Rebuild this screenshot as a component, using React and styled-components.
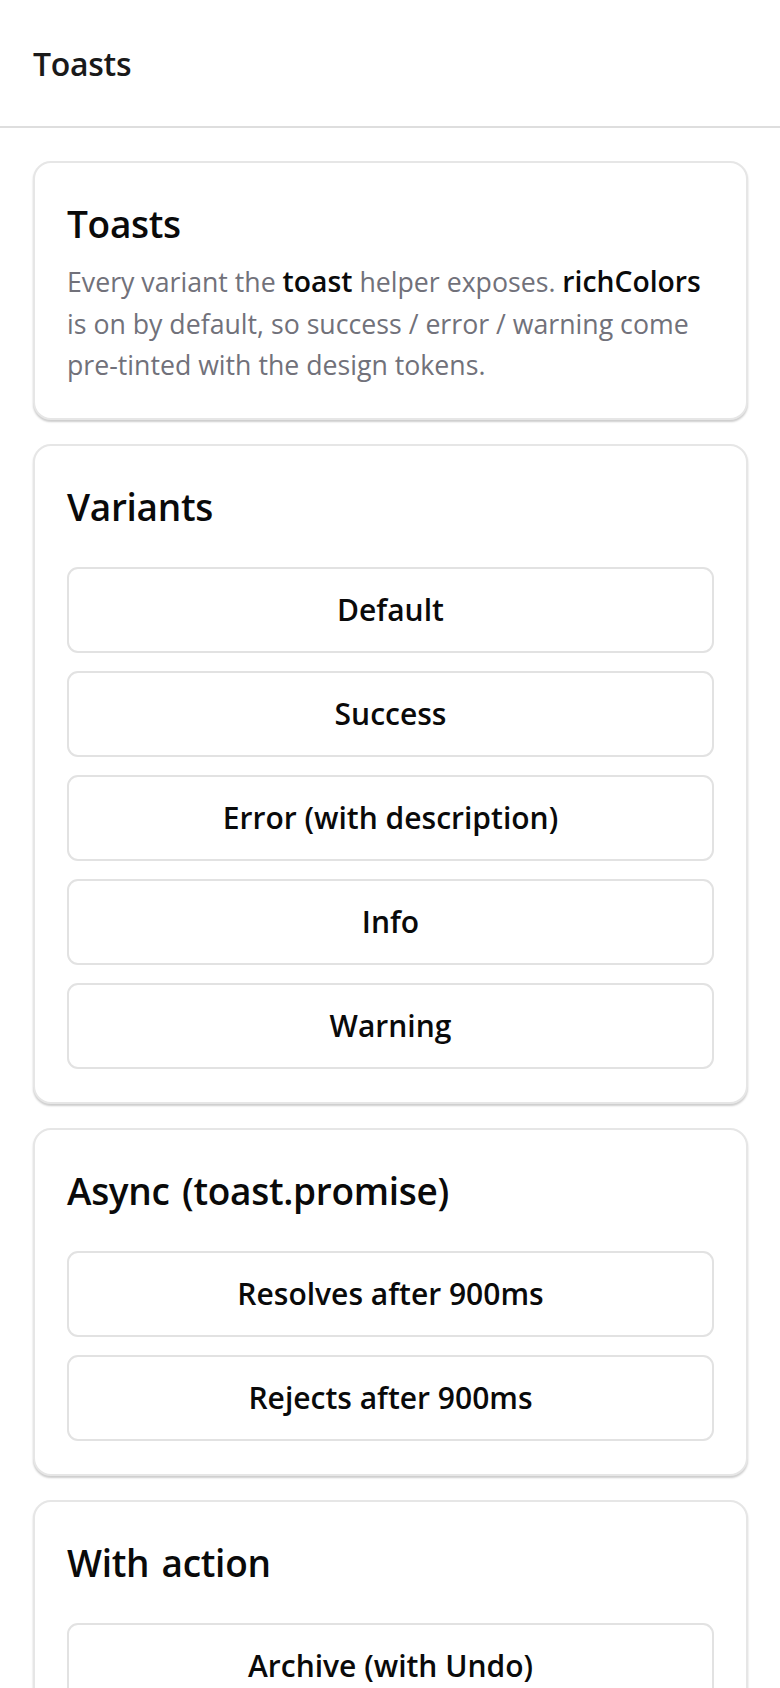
import styled, { createGlobalStyle } from "styled-components";

const GlobalStyle = createGlobalStyle`
  * {
    box-sizing: border-box;
  }

  body {
    margin: 0;
    background: #ffffff;
    font-family: "Open Sans", "Noto Sans", sans-serif;
    color: #0a0a0a;
  }
`;

const Header = styled.header`
  display: flex;
  align-items: center;
  height: 128px;
  padding: 0 33px;
  border-bottom: 2px solid #dedede;
`;

const PageTitle = styled.h1`
  margin: 0;
  font-size: 32px;
  font-weight: 600;
  color: #1a1a1a;
  letter-spacing: -0.3px;
`;

const Main = styled.main`
  display: flex;
  flex-direction: column;
  gap: 24px;
  padding: 33px 32px 40px 33px;
`;

const Card = styled.section`
  display: flex;
  flex-direction: column;
  padding: 39px 32px 31px;
  border: 2px solid #e6e6e6;
  border-radius: 18px;
  background: #ffffff;
  box-shadow: 0 2px 2px rgba(0, 0, 0, 0.2);
`;

const CardTitle = styled.h2`
  margin: 0;
  font-size: 37px;
  line-height: 43px;
  font-weight: 600;
  color: #0a0a0a;
  letter-spacing: -0.3px;
  word-spacing: 3px;
`;

const Description = styled.p`
  margin: 16px 0 1px;
  font-size: 26.7px;
  line-height: 41.5px;
  color: #71717a;

  strong {
    font-size: 1.06em;
    font-weight: 600;
    color: #0a0a0a;
  }
`;

const ButtonStack = styled.div`
  display: flex;
  flex-direction: column;
  gap: 18px;
  margin-top: 39px;
  padding-bottom: 2px;
`;

const ActionButton = styled.button`
  display: flex;
  align-items: center;
  justify-content: center;
  height: 86px;
  width: 100%;
  border: 2px solid #e2e2e2;
  border-radius: 11px;
  background: #ffffff;
  font-family: inherit;
  font-size: 30px;
  font-weight: 600;
  color: #0a0a0a;
  cursor: pointer;
`;

const sections = [
  {
    title: "Variants",
    buttons: ["Default", "Success", "Error (with description)", "Info", "Warning"],
  },
  {
    title: "Async (toast.promise)",
    buttons: ["Resolves after 900ms", "Rejects after 900ms"],
  },
  {
    title: "With action",
    buttons: ["Archive (with Undo)"],
  },
];

export default function App() {
  return (
    <>
      <GlobalStyle />
      <Header>
        <PageTitle>Toasts</PageTitle>
      </Header>
      <Main>
        <Card>
          <CardTitle>Toasts</CardTitle>
          <Description>
            Every variant the <strong>toast</strong> helper exposes.{" "}
            <strong>richColors</strong> is on by default, so success / error /
            warning come pre-tinted with the design tokens.
          </Description>
        </Card>
        {sections.map((section) => (
          <Card key={section.title}>
            <CardTitle>{section.title}</CardTitle>
            <ButtonStack>
              {section.buttons.map((label) => (
                <ActionButton key={label} type="button">
                  {label}
                </ActionButton>
              ))}
            </ButtonStack>
          </Card>
        ))}
      </Main>
    </>
  );
}
